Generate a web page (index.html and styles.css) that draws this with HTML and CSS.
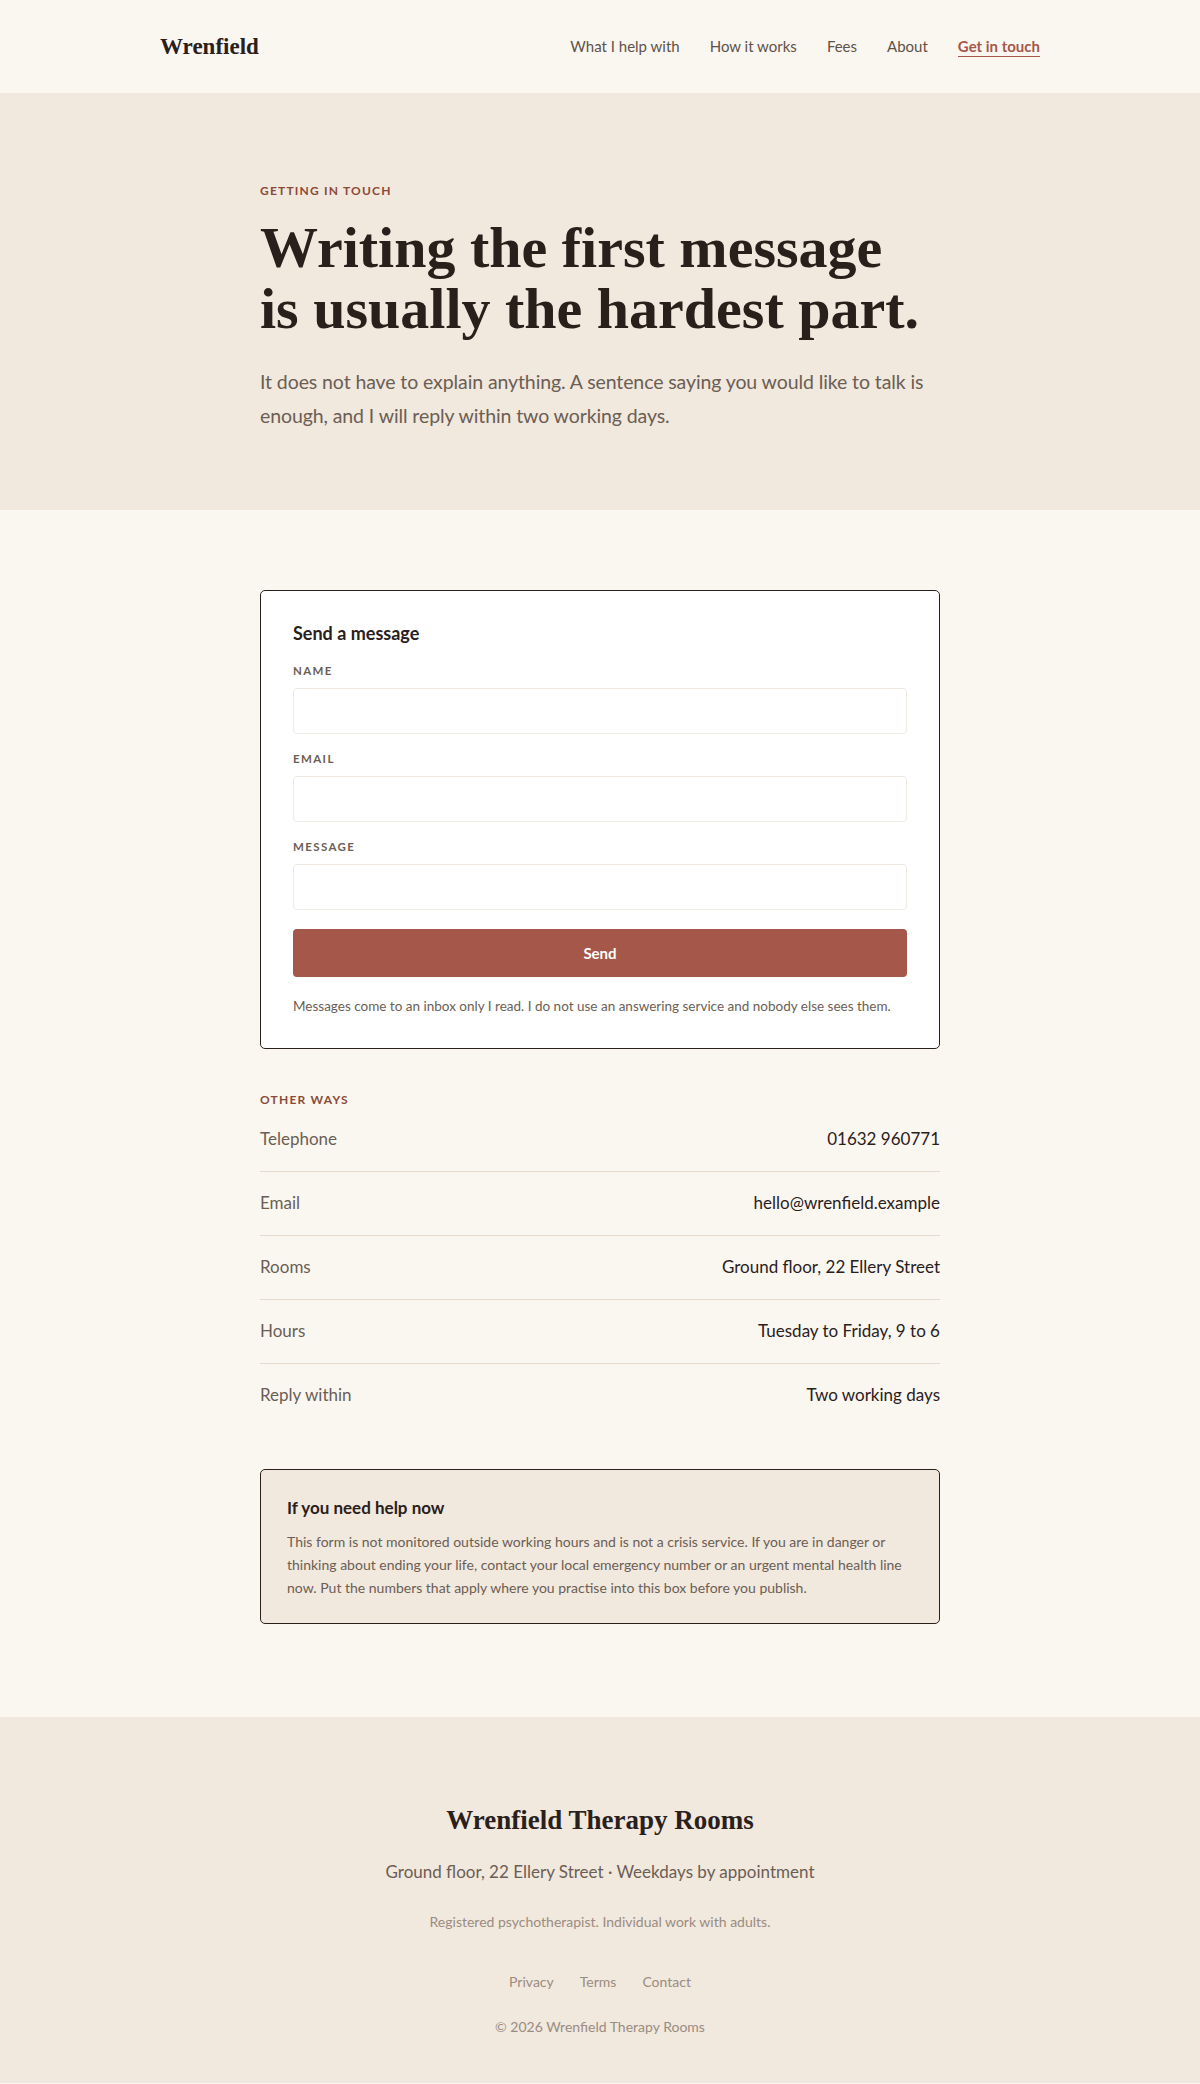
FILE: index.html
```html
<!DOCTYPE html>
<html lang="en">
<head>
    <meta charset="UTF-8">
    <meta name="viewport" content="width=device-width, initial-scale=1.0">
    <title>Get in touch · Wrenfield</title>
    <link rel="stylesheet" href="styles.css">
</head>
<body>
    <header class="site-header">
        <div class="wrap header-row">
            <a class="logo" href="#">Wrenfield</a>
            <nav class="nav">
                <a href="#">What I help with</a>
                <a href="#">How it works</a>
                <a href="#">Fees</a>
                <a href="#">About</a>
                <a href="#" class="current">Get in touch</a>
            </nav>
        </div>
    </header>

    <section class="hero">
        <div class="narrow">
            <div class="eyebrow">Getting in touch</div>
            <h1>Writing the first message<br>is usually the hardest part.</h1>
            <p class="lead">It does not have to explain anything. A sentence saying you would like to talk is enough, and I will reply within two working days.</p>
        </div>
    </section>

    <main class="content">
        <div class="narrow">
            <form class="card" onsubmit="return false">
                <h2>Send a message</h2>
                <label for="name">Name</label>
                <input id="name" type="text">
                <label for="email">Email</label>
                <input id="email" type="email">
                <label for="message">Message</label>
                <textarea id="message" rows="1"></textarea>
                <button type="submit" class="send">Send</button>
                <p class="note">Messages come to an inbox only I read. I do not use an answering service and nobody else sees them.</p>
            </form>

            <div class="other">
                <div class="eyebrow">Other ways</div>
                <div class="row"><span class="key">Telephone</span><span class="val">01632 960771</span></div>
                <div class="row"><span class="key">Email</span><span class="val">hello@wrenfield.example</span></div>
                <div class="row"><span class="key">Rooms</span><span class="val">Ground floor, 22 Ellery Street</span></div>
                <div class="row"><span class="key">Hours</span><span class="val">Tuesday to Friday, 9 to 6</span></div>
                <div class="row"><span class="key">Reply within</span><span class="val">Two working days</span></div>
            </div>

            <div class="help">
                <h3>If you need help now</h3>
                <p>This form is not monitored outside working hours and is not a crisis service. If you are in danger or thinking about ending your life, contact your local emergency number or an urgent mental health line now. Put the numbers that apply where you practise into this box before you publish.</p>
            </div>
        </div>
    </main>

    <footer class="site-footer">
        <div class="foot-title">Wrenfield Therapy Rooms</div>
        <div class="foot-address">Ground floor, 22 Ellery Street · Weekdays by appointment</div>
        <div class="foot-small">Registered psychotherapist. Individual work with adults.</div>
        <div class="foot-links">
            <a href="#">Privacy</a>
            <a href="#">Terms</a>
            <a href="#">Contact</a>
        </div>
        <div class="foot-small copy">© 2026 Wrenfield Therapy Rooms</div>
    </footer>
</body>
</html>
```

FILE: styles.css
```css
body {
    margin: 0;
    font-family: Lato, "Noto Sans", sans-serif;
    color: #2a201b;
    background-color: #faf7f1;
}
a {
    color: inherit;
    text-decoration: none;
}
.wrap {
    width: 880px;
    margin: 0 auto;
}
.narrow {
    width: 680px;
    margin: 0 auto;
}

/* header */
.site-header {
    background-color: #faf7f1;
}
.header-row {
    height: 93px;
    display: flex;
    align-items: center;
    justify-content: space-between;
}
.logo {
    font-family: "Liberation Serif", serif;
    font-weight: bold;
    font-size: 23px;
    color: #2a201b;
}
.nav {
    display: flex;
    gap: 30px;
    font-size: 15px;
    color: #5f5249;
}
.nav .current {
    color: #a5584a;
    font-weight: 700;
    border-bottom: 1.5px solid #a5584a;
    padding-bottom: 1px;
}

/* hero */
.hero {
    background-color: #f1e8de;
    padding: 90px 0 77px;
}
.eyebrow {
    font-size: 12px;
    line-height: 16px;
    font-weight: 700;
    letter-spacing: 0.1em;
    text-transform: uppercase;
    color: #8b4a38;
}
h1 {
    font-family: "Liberation Serif", serif;
    font-weight: bold;
    font-size: 58px;
    line-height: 61px;
    margin: 18px 0 26px;
    color: #2a201b;
}
.lead {
    font-size: 19.5px;
    line-height: 34px;
    letter-spacing: -0.1px;
    color: #6b5e54;
    margin: 0;
}

/* form card */
.content {
    padding: 80px 0 93px;
}
.card {
    background-color: white;
    border: 1.5px solid #2a201b;
    border-radius: 5px;
    padding: 30px 32px 32px;
    display: flex;
    flex-direction: column;
}
.card h2 {
    font-size: 18px;
    line-height: 24px;
    font-weight: 700;
    margin: 0 0 18px;
}
.card label {
    font-size: 11.5px;
    line-height: 16px;
    font-weight: 700;
    letter-spacing: 0.12em;
    text-transform: uppercase;
    color: #6b5e54;
    margin-bottom: 9px;
}
.card input,
.card textarea {
    height: 46px;
    box-sizing: border-box;
    border: 1px solid #efe9e2;
    border-radius: 4px;
    background: white;
    font: inherit;
    resize: none;
    margin: 0 0 17px;
}
.card textarea {
    margin-bottom: 19px;
}
.send {
    height: 48px;
    border: none;
    border-radius: 4px;
    background-color: #a5584a;
    color: white;
    font-family: inherit;
    font-size: 15px;
    font-weight: 700;
    cursor: pointer;
}
.note {
    margin: 19px 0 0;
    font-size: 13.5px;
    line-height: 20px;
    color: #6b5e54;
}

/* other ways */
.other {
    margin-top: 43px;
}
.row {
    display: flex;
    justify-content: space-between;
    padding: 18px 0 19px;
    font-size: 17px;
    line-height: 26px;
    border-bottom: 1px solid #e6dbcf;
}
.row:last-child {
    border-bottom: none;
}
.key {
    color: #6b5e54;
}
.val {
    color: #2a201b;
}

/* crisis box */
.help {
    margin-top: 42px;
    background-color: #f1e8de;
    border: 1.5px solid #2a201b;
    border-radius: 5px;
    padding: 26px 26px 24px;
}
.help h3 {
    font-size: 17px;
    line-height: 24px;
    font-weight: 700;
    margin: 0 0 10px;
}
.help p {
    font-size: 14px;
    line-height: 23px;
    color: #6b5e54;
    margin: 0;
}

/* footer */
.site-footer {
    background-color: #f1e8de;
    text-align: center;
    padding: 86px 0 46px;
}
.foot-title {
    font-family: "Liberation Serif", serif;
    font-weight: bold;
    font-size: 27px;
    line-height: 34px;
    color: #2a201b;
}
.foot-address {
    margin-top: 21px;
    font-size: 17px;
    line-height: 27px;
    color: #6b5e54;
}
.foot-small {
    margin-top: 27px;
    font-size: 14px;
    line-height: 20px;
    color: #9a8c80;
}
.foot-links {
    margin-top: 40px;
    display: flex;
    justify-content: center;
    gap: 26px;
    font-size: 14px;
    line-height: 20px;
    color: #9a8c80;
}
.copy {
    margin-top: 25px;
}
```
